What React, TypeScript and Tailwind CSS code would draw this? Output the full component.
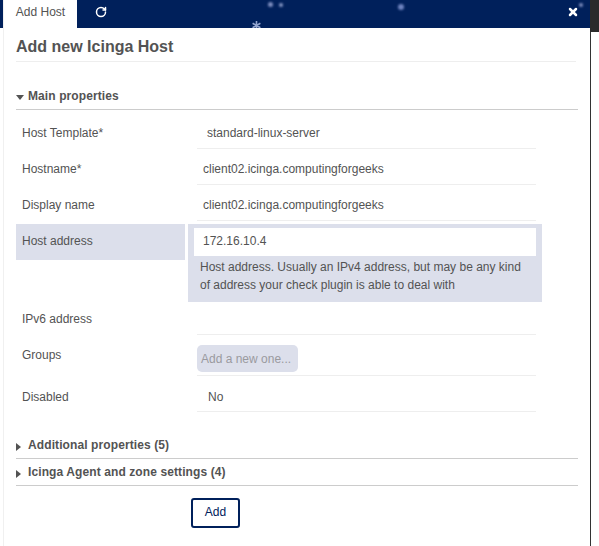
import { ReactNode } from "react";
import { RotateCw, X } from "lucide-react";

const textClass = "text-[12px] leading-[18px] text-[#535353]";

function Row({
  label,
  rowClass,
  labelClass,
  children,
}: {
  label: string;
  rowClass: string;
  labelClass: string;
  children?: ReactNode;
}) {
  return (
    <div className={`flex ${rowClass}`}>
      <div className={`w-[168px] pl-[6px] ${labelClass} ${textClass}`}>{label}</div>
      <div className="ml-[13px] w-[339px] border-b border-[#eeeeee]">{children}</div>
    </div>
  );
}

function Section({ title, open }: { title: string; open?: boolean }) {
  return (
    <div className="flex h-[27px] items-center border-b border-[#cccccc]">
      {open ? (
        <svg width="8" height="5" viewBox="0 0 8 5" className="mt-[3px] mr-[4px]">
          <path d="M0 0h8L4 5z" fill="#535353" />
        </svg>
      ) : (
        <svg width="5" height="8" viewBox="0 0 5 8" className="mt-[3px] mr-[7px]">
          <path d="M0 0l5 4-5 4z" fill="#535353" />
        </svg>
      )}
      <span className="text-[12px] font-bold tracking-[0.1px] text-[#535353]">{title}</span>
    </div>
  );
}

const stars = [
  { key: "a", cls: "left-[264px] top-[2px] size-[5px] bg-[#7f8fc0]" },
  { key: "b", cls: "left-[275px] top-[3px] size-[4px] bg-[#8a9ac8]" },
  { key: "c", cls: "left-[394px] top-[4px] size-[6px] bg-[#6f84c0]" },
  { key: "d", cls: "left-[575px] top-[3px] size-[4px] bg-[#7f8fc0]" },
];

export default function App() {
  return (
    <div className="h-[546px] w-[599px] overflow-hidden bg-white font-['Liberation_Sans',Arial,sans-serif]">
      <div className="flex h-full">
        <div className="h-[28px] w-[3px] shrink-0 bg-[#00205b]" />
        <div className="flex h-full w-[587px] shrink-0 flex-col border-l border-[#f0f0f0]">
          <div className="relative flex h-[28px] shrink-0 items-stretch overflow-hidden bg-[#00205b]">
            {stars.map((s) => (
              <div key={s.key} className={`absolute rounded-full blur-[1px] ${s.cls}`} />
            ))}
            <svg width="9" height="9" viewBox="0 0 9 9" className="absolute left-[248px] top-[21px]">
              <path d="M4.5 0v9M0.6 2.2l7.8 4.6M8.4 2.2L0.6 6.8" stroke="#93a5cf" strokeWidth="1.6" />
            </svg>
            <div className="flex w-[73px] items-center justify-center bg-white pb-[5px] text-[12px] text-[#535353]">
              Add Host
            </div>
            <div className="flex w-[47px] items-center justify-center pb-[4px]">
              <RotateCw size={12} strokeWidth={3} color="#ffffff" />
            </div>
            <div className="ml-auto flex w-[23px] items-center pb-[5px]">
              <X size={12} strokeWidth={5} color="#ffffff" />
            </div>
          </div>
          <div className="flex flex-1 flex-col pl-[12px]">
            <div className="mr-[14px] flex h-[34px] shrink-0 items-center border-b border-[#eeeeee] pt-[4px] text-[16px] font-bold text-[#535353]">
              Add new Icinga Host
            </div>
            <div className="mt-[21px] mr-[12px]">
              <Section title="Main properties" open />
            </div>
            <div className="mt-[3px]">
              <Row label="Host Template*" rowClass="h-[36px]" labelClass="pt-[11px]">
                <div className={`pl-[10px] pt-[11px] ${textClass}`}>standard-linux-server</div>
              </Row>
              <Row label="Hostname*" rowClass="h-[36px]" labelClass="pt-[11px]">
                <div className={`pl-[6px] pt-[11px] ${textClass}`}>client02.icinga.computingforgeeks</div>
              </Row>
              <Row label="Display name" rowClass="h-[36px]" labelClass="pt-[11px]">
                <div className={`pl-[6px] pt-[11px] ${textClass}`}>client02.icinga.computingforgeeks</div>
              </Row>
            </div>
            <div className="mt-[3px] flex">
              <div className={`h-[36px] w-[169px] bg-[#dcdfeb] pl-[6px] pt-[8px] ${textClass}`}>Host address</div>
              <div className="ml-[3px] h-[78px] w-[354px] bg-[#dcdfeb] px-[6px] pt-[4px]">
                <div className={`h-[28px] bg-white pl-[9px] pt-[4px] ${textClass}`}>172.16.10.4</div>
                <p className={`mt-[2px] pl-[6px] ${textClass}`}>
                  Host address. Usually an IPv4 address, but may be any kind
                  <br />
                  of address your check plugin is able to deal with
                </p>
              </div>
            </div>
            <Row label="IPv6 address" rowClass="h-[33px]" labelClass="pt-[8px]" />
            <Row label="Groups" rowClass="h-[41px]" labelClass="pt-[11px]">
              <div className="mt-[10px] flex h-[27px] w-[101px] items-center rounded-[5px] bg-[#dcdfeb] pl-[4px] text-[12px] text-[#9a9a9f]">
                Add a new one...
              </div>
            </Row>
            <Row label="Disabled" rowClass="h-[36px]" labelClass="pt-[12px]">
              <div className={`pl-[11px] pt-[12px] ${textClass}`}>No</div>
            </Row>
            <div className="mt-[20px] mr-[12px]">
              <Section title="Additional properties (5)" />
              <Section title="Icinga Agent and zone settings (4)" />
            </div>
            <button className="mt-[12px] ml-[175px] flex h-[30px] w-[49px] items-center justify-center rounded-[3px] border-2 border-[#00205b] pb-[3px] text-[12px] text-[#00205b]">
              Add
            </button>
          </div>
        </div>
        <div className="w-[9px] shrink-0">
          <div className="h-[32px] w-full bg-[#2b2b2b]" />
          <div className="h-[514px] w-[1px] bg-[#333333]" />
        </div>
      </div>
    </div>
  );
}
